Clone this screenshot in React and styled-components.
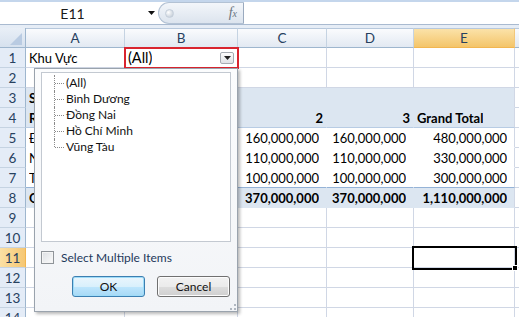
import React from "react";
import styled, { createGlobalStyle, css } from "styled-components";

const GlobalStyle = createGlobalStyle`
  html, body {
    margin: 0;
    padding: 0;
    background: #ffffff;
    overflow: hidden;
  }
  * {
    box-sizing: border-box;
  }
`;

const COLS = ["A", "B", "C", "D", "E"];

// column B sits under the filter popup, so its values are left out
const rows = [
  { n: 1, cells: [{ t: "Khu Vực" }, { t: "(All)", filter: true }, {}, {}, {}] },
  { n: 2, cells: [{}, {}, {}, {}, {}] },
  { n: 3, pivot: "head", cells: [{ t: "S", b: true }, {}, {}, {}, {}] },
  {
    n: 4,
    pivot: "label",
    cells: [
      { t: "R", b: true },
      {},
      { t: "2", b: true, r: true },
      { t: "3", b: true, r: true },
      { t: "Grand Total", b: true },
    ],
  },
  {
    n: 5,
    pivot: "body",
    cells: [
      { t: "Đ" },
      {},
      { t: "160,000,000", r: true },
      { t: "160,000,000", r: true },
      { t: "480,000,000", r: true },
    ],
  },
  {
    n: 6,
    pivot: "body",
    cells: [
      { t: "N" },
      {},
      { t: "110,000,000", r: true },
      { t: "110,000,000", r: true },
      { t: "330,000,000", r: true },
    ],
  },
  {
    n: 7,
    pivot: "last",
    cells: [
      { t: "T" },
      {},
      { t: "100,000,000", r: true },
      { t: "100,000,000", r: true },
      { t: "300,000,000", r: true },
    ],
  },
  {
    n: 8,
    pivot: "total",
    cells: [
      { t: "G", b: true },
      {},
      { t: "370,000,000", b: true, r: true },
      { t: "370,000,000", b: true, r: true },
      { t: "1,110,000,000", b: true, r: true },
    ],
  },
  { n: 9 },
  { n: 10 },
  { n: 11, active: true },
  { n: 12 },
  { n: 13 },
  { n: 14 },
];

const regions = ["(All)", "Bình Dương", "Đồng Nai", "Hồ Chí Minh", "Vũng Tàu"];

const App = () => {
  return (
    <Page>
      <GlobalStyle />
      <FormulaBar>
        <FormulaRow>
          <NameBox>E11</NameBox>
          <NameArrow>
            <svg width="7" height="4" viewBox="0 0 7 4">
              <path d="M0 0h7L3.5 4z" fill="#111" />
            </svg>
          </NameArrow>
          <Grip>
            <GripKnob />
            <FxLabel>
              f<small>x</small>
            </FxLabel>
          </Grip>
          <FormulaInput />
        </FormulaRow>
      </FormulaBar>

      <Sheet>
        <Corner>
          <svg width="12" height="12" viewBox="0 0 12 12">
            <path d="M12 0V12H0z" fill="#b9cbe2" />
          </svg>
        </Corner>
        {COLS.map((c) => (
          <ColHead key={c} $active={c === "E"}>
            {c}
          </ColHead>
        ))}
        <ColHead $filler />

        {rows.map((row) => (
          <React.Fragment key={row.n}>
            <RowHead $active={row.active}>{row.n}</RowHead>
            {COLS.map((c, i) => {
              const cell = (row.cells && row.cells[i]) || {};
              const selected = row.active && c === "E";
              return (
                <Cell
                  key={c}
                  $bold={cell.b}
                  $right={cell.r}
                  $pivot={row.pivot}
                  $last={c === "E"}
                  $filter={cell.filter}
                  $selected={selected}
                >
                  <CellText>{cell.t}</CellText>
                  {cell.filter && (
                    <FilterButton>
                      <svg width="7" height="4" viewBox="0 0 7 4">
                        <path d="M0 0h7L3.5 4z" fill="#222" />
                      </svg>
                    </FilterButton>
                  )}
                  {selected && <FillHandle />}
                </Cell>
              );
            })}
            <Cell $filler />
          </React.Fragment>
        ))}
      </Sheet>

      <FilterPopup>
        <ListBox>
          <Tree>
            {regions.map((r, i) => (
              <TreeItem key={r} $last={i === regions.length - 1}>
                {r}
              </TreeItem>
            ))}
          </Tree>
        </ListBox>
        <CheckRow>
          <CheckBox />
          <CheckLabel>Select Multiple Items</CheckLabel>
        </CheckRow>
        <ButtonRow>
          <DialogButton $focused>OK</DialogButton>
          <DialogButton>Cancel</DialogButton>
        </ButtonRow>
        <ResizeGrip>
          <svg width="7" height="7" viewBox="0 0 7 7">
            <rect x="5" y="1" width="2" height="2" fill="#b0b7c0" />
            <rect x="1" y="5" width="2" height="2" fill="#b0b7c0" />
            <rect x="5" y="5" width="2" height="2" fill="#b0b7c0" />
          </svg>
        </ResizeGrip>
      </FilterPopup>
    </Page>
  );
};

export default App;

const cellFont = `"Lato", "Open Sans", sans-serif`;
const uiFont = `"Lato", "Open Sans", sans-serif`;

const Page = styled.div`
  position: relative;
  width: 519px;
  height: 317px;
  overflow: hidden;
  background: #fff;
  font-family: ${cellFont};
`;

const FormulaBar = styled.div`
  height: 28px;
  background: #e6edf6;
  border-top: 2px solid #c4d6ec;
  padding-bottom: 3px;
`;

const FormulaRow = styled.div`
  display: flex;
  height: 23px;
  background: #fff;
  border-bottom: 1px solid #a9bad0;
`;

const NameBox = styled.div`
  width: 145px;
  display: flex;
  align-items: center;
  justify-content: center;
  font-size: 14px;
  color: #1a1a1a;
`;

const NameArrow = styled.div`
  width: 12px;
  display: flex;
  align-items: center;
  justify-content: center;
`;

const Grip = styled.div`
  width: 86px;
  margin-left: 1px;
  display: flex;
  align-items: center;
  justify-content: space-between;
  padding: 0 6px 0 6px;
  border: 1px solid #b3c2d4;
  border-right: 1px solid #9aaabf;
  border-radius: 12px 0 0 12px;
  background: linear-gradient(#f3f6fa, #dce4ee);
`;

const GripKnob = styled.span`
  width: 9px;
  height: 9px;
  border-radius: 50%;
  background: radial-gradient(circle at 35% 35%, #ffffff, #b8c3d0);
  border: 1px solid #c5cfdb;
`;

const FxLabel = styled.span`
  font-family: "Liberation Serif", serif;
  font-style: italic;
  font-size: 14px;
  color: #6b7580;
  small {
    font-size: 10px;
  }
`;

const FormulaInput = styled.div`
  flex: 1;
  background: #fff;
`;

const Sheet = styled.div`
  display: grid;
  grid-template-columns: 26px 99px 113px 89px 87px 101px 1fr;
  grid-auto-rows: 20px;
`;

const headBase = css`
  display: flex;
  align-items: center;
  justify-content: center;
  font-size: 13.5px;
  color: #27415f;
  border-right: 1px solid #9eb6ce;
  border-bottom: 1px solid #9eb6ce;
`;

const Corner = styled.div`
  ${headBase};
  background: linear-gradient(#e9eff7, #d6e1ee);
  justify-content: flex-end;
  align-items: flex-end;
  padding: 0 3px 2px 0;
  svg {
    display: block;
  }
`;

const ColHead = styled.div`
  ${headBase};
  border-top: 1px solid #b7c8dc;
  border-right-color: #c5d3e2;
  background: ${(p) =>
    p.$active
      ? "linear-gradient(#fbe2a9, #f4c56a)"
      : "linear-gradient(#fafbfd, #e2e9f2)"};
  ${(p) => p.$active && "border-right-color: #f2c77a; border-bottom-color: #f2b650;"}
`;

const RowHead = styled.div`
  ${headBase};
  border-bottom-color: #c5d3e2;
  background: ${(p) => (p.$active ? "linear-gradient(90deg, #fbe0a4, #f6c773)" : "#e4ecf7")};
  ${(p) => p.$active && "border-right-color: #f2b650;"}
`;

const pivotBg = {
  head: "#dce6f1",
  label: "#dce6f1",
  total: "#dce6f1",
  body: "#ffffff",
  last: "#ffffff",
};

const Cell = styled.div`
  position: relative;
  display: flex;
  align-items: center;
  justify-content: ${(p) => (p.$right ? "flex-end" : "flex-start")};
  padding: ${(p) => (p.$right ? "0 7px 0 3px" : "0 3px")};
  font-size: 13px;
  font-weight: ${(p) => (p.$bold ? 700 : 400)};
  color: #000;
  white-space: nowrap;
  border-right: 1px solid #d0d7e5;
  border-bottom: 1px solid #d0d7e5;
  ${(p) =>
    p.$pivot &&
    css`
      background: ${pivotBg[p.$pivot]};
      border-color: ${pivotBg[p.$pivot]};
      ${p.$last && "border-right-color: #d0d7e5;"}
    `}
  ${(p) => p.$pivot === "label" && "border-bottom-color: #b8cce4; padding-right: 3px;"}
  ${(p) => p.$pivot === "last" && "border-bottom-color: #95b3d7;"}
  ${(p) =>
    p.$filter &&
    css`
      outline: 2px solid #d9252f;
      outline-offset: -1px;
      z-index: 2;
      font-size: 14.5px;
    `}
  ${(p) =>
    p.$selected &&
    css`
      outline: 2px solid #000;
      outline-offset: 0px;
      z-index: 2;
    `}
  ${(p) => p.$filler && "border-right: none;"}
`;

const CellText = styled.span`
  overflow: hidden;
`;

const FilterButton = styled.div`
  position: absolute;
  right: 3px;
  top: 4px;
  width: 14px;
  height: 12px;
  display: flex;
  align-items: center;
  justify-content: center;
  border: 1px solid #a6acb3;
  border-radius: 2px;
  background: linear-gradient(#fdfdfd, #dfe2e6);
`;

const FillHandle = styled.span`
  position: absolute;
  right: -4px;
  bottom: -4px;
  width: 6px;
  height: 6px;
  background: #000;
  border: 1px solid #fff;
`;

const FilterPopup = styled.div`
  position: absolute;
  left: 34px;
  top: 68px;
  width: 204px;
  height: 244px;
  display: flex;
  flex-direction: column;
  padding: 3px 6px 0 6px;
  background: linear-gradient(#fbfcfd, #f2f4f7);
  border: 1px solid #9aa3ad;
  box-shadow: 2px 2px 3px rgba(0, 0, 0, 0.28);
  font-family: ${uiFont};
  z-index: 10;
`;

const ListBox = styled.div`
  height: 170px;
  background: #fff;
  border: 1px solid #c3c9d1;
  padding: 2px 0 0 12px;
`;

const Tree = styled.div`
  display: flex;
  flex-direction: column;
`;

const TreeItem = styled.div`
  position: relative;
  height: 16px;
  line-height: 16px;
  padding-left: 12px;
  font-size: 12px;
  color: #111;
  &::before {
    content: "";
    position: absolute;
    left: 0;
    top: 0;
    height: ${(p) => (p.$last ? "8px" : "16px")};
    border-left: 1px dotted #8a8a8a;
  }
  &::after {
    content: "";
    position: absolute;
    left: 1px;
    top: 8px;
    width: 9px;
    border-top: 1px dotted #8a8a8a;
  }
`;

const CheckRow = styled.div`
  display: flex;
  align-items: center;
  gap: 7px;
  margin-top: 8px;
  height: 14px;
`;

const CheckBox = styled.span`
  width: 13px;
  height: 13px;
  border: 1px solid #8f9499;
  background: linear-gradient(135deg, #dcdfe3, #fbfbfb);
  box-shadow: inset 0 0 0 1px #f4f4f4;
`;

const CheckLabel = styled.span`
  font-size: 12px;
  color: #1e395b;
`;

const ButtonRow = styled.div`
  display: flex;
  justify-content: flex-end;
  gap: 12px;
  margin-top: 12px;
  padding-right: 1px;
`;

const DialogButton = styled.div`
  width: 73px;
  height: 21px;
  display: flex;
  align-items: center;
  justify-content: center;
  font-size: 12px;
  color: #111;
  border-radius: 3px;
  border: 1px solid ${(p) => (p.$focused ? "#3c7fb1" : "#707070")};
  background: ${(p) =>
    p.$focused
      ? "linear-gradient(#eaf6fd 0%, #d9f0fc 50%, #bee6fd 51%, #a7d9f5 100%)"
      : "linear-gradient(#f2f2f2 0%, #ebebeb 50%, #dddddd 51%, #cfcfcf 100%)"};
  box-shadow: inset 0 0 0 1px ${(p) => (p.$focused ? "#9fdcf8" : "#fcfcfc")};
`;

const ResizeGrip = styled.div`
  position: absolute;
  right: 1px;
  bottom: 1px;
  svg {
    display: block;
  }
`;
